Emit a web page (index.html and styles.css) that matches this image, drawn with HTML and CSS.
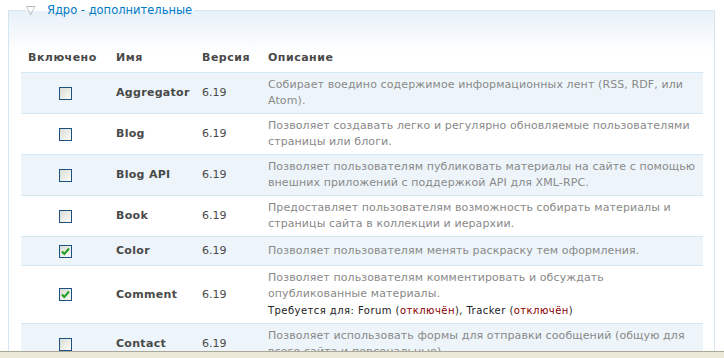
FILE: index.html
```html
<!DOCTYPE html>
<html lang="ru">
<head>
    <meta charset="UTF-8" />
    <title>Модули</title>
    <link rel="stylesheet" href="styles.css">
</head>
<body>
    <fieldset class="group">
        <legend><span class="toggle">&#9661;</span> Ядро - дополнительные</legend>

        <table class="modules">
            <thead>
                <tr>
                    <th class="col-check">Включено</th>
                    <th class="col-name">Имя</th>
                    <th class="col-version">Версия</th>
                    <th>Описание</th>
                </tr>
            </thead>
            <tbody>
                <tr class="odd">
                    <td class="checkbox"><span class="cb"></span></td>
                    <td class="name">Aggregator</td>
                    <td class="version">6.19</td>
                    <td class="description">Собирает воедино содержимое информационных лент (RSS, RDF, или Atom).</td>
                </tr>
                <tr class="even">
                    <td class="checkbox"><span class="cb"></span></td>
                    <td class="name">Blog</td>
                    <td class="version">6.19</td>
                    <td class="description">Позволяет создавать легко и регулярно обновляемые пользователями страницы или блоги.</td>
                </tr>
                <tr class="odd">
                    <td class="checkbox"><span class="cb"></span></td>
                    <td class="name">Blog API</td>
                    <td class="version">6.19</td>
                    <td class="description">Позволяет пользователям публиковать материалы на сайте с помощью внешних приложений с поддержкой API для XML-RPC.</td>
                </tr>
                <tr class="even">
                    <td class="checkbox"><span class="cb"></span></td>
                    <td class="name">Book</td>
                    <td class="version">6.19</td>
                    <td class="description">Предоставляет пользователям возможность собирать материалы и страницы сайта в коллекции и иерархии.</td>
                </tr>
                <tr class="odd">
                    <td class="checkbox"><span class="cb checked"><svg viewBox="0 0 11 11" width="11" height="11"><path d="M2 5.5 L4.3 8 L9 2.5" fill="none" stroke="#21a121" stroke-width="2"/></svg></span></td>
                    <td class="name">Color</td>
                    <td class="version">6.19</td>
                    <td class="description">Позволяет пользователям менять раскраску тем оформления.</td>
                </tr>
                <tr class="even">
                    <td class="checkbox"><span class="cb checked"><svg viewBox="0 0 11 11" width="11" height="11"><path d="M2 5.5 L4.3 8 L9 2.5" fill="none" stroke="#21a121" stroke-width="2"/></svg></span></td>
                    <td class="name">Comment</td>
                    <td class="version">6.19</td>
                    <td class="description">Позволяет пользователям комментировать и обсуждать опубликованные материалы.
                        <div class="depends">Требуется для: Forum (<span class="off">отключён</span>), Tracker (<span class="off">отключён</span>)</div>
                    </td>
                </tr>
                <tr class="odd">
                    <td class="checkbox"><span class="cb"></span></td>
                    <td class="name">Contact</td>
                    <td class="version">6.19</td>
                    <td class="description">Позволяет использовать формы для отправки сообщений (общую для всего сайта и персональные).</td>
                </tr>
            </tbody>
        </table>
    </fieldset>

    <div class="statusbar"></div>
</body>
</html>
```

FILE: styles.css
```css
body {
    margin: 0;
    font-family: "DejaVu Sans", Verdana, sans-serif;
    font-size: 11px;
    color: #494949;
    background: #fff;
}

.group {
    margin: 3px 9px 0 8px;
    padding: 27px 11px 0 12px;
    border: 1px solid #d5e6f3;
    border-bottom: none;
    background: linear-gradient(#e8f1f9, #fff 42px) no-repeat;
}

.group legend {
    padding: 0 2px 0 0;
    margin-left: 5px;
    font-size: 11.5px;
    color: #027ac6;
}

.toggle {
    color: #aaa;
    font-size: 12px;
    margin-right: 8px;
}

.modules {
    width: 100%;
    table-layout: fixed;
    border-collapse: collapse;
}

.modules th {
    text-align: left;
    font-weight: bold;
    letter-spacing: 0.5px;
    padding: 7px 7px 8px;
    border-bottom: 1px solid #d3e7f4;
}

.col-check { width: 74px; }
.col-name { width: 72px; }
.col-version { width: 52px; }

.modules td {
    padding: 4px 7px;
    line-height: 16px;
    border-bottom: 1px solid #d3e7f4;
    vertical-align: middle;
}

.modules tr.odd td {
    background: #edf5fa;
}

td.checkbox {
    height: 20px;
    text-align: center;
    padding-right: 6px;
}

.cb {
    display: inline-block;
    width: 11px;
    height: 11px;
    border: 1px solid #1c5180;
    background: linear-gradient(135deg, #dcdcd5, #fbfbf9);
    vertical-align: middle;
}

.cb svg {
    display: block;
}

td.name {
    font-weight: bold;
    letter-spacing: 0.3px;
}

td.description {
    color: #898989;
    letter-spacing: 0.1px;
    padding-right: 4px;
}

.depends {
    color: #222;
    font-size: 10px;
    letter-spacing: 0.45px;
    line-height: 17px;
}

.depends .off {
    color: #8b0000;
}

.statusbar {
    position: fixed;
    left: 0;
    right: 0;
    bottom: 0;
    height: 6px;
    border-top: 1px solid #aca899;
    background: #ece9d8;
}
```
